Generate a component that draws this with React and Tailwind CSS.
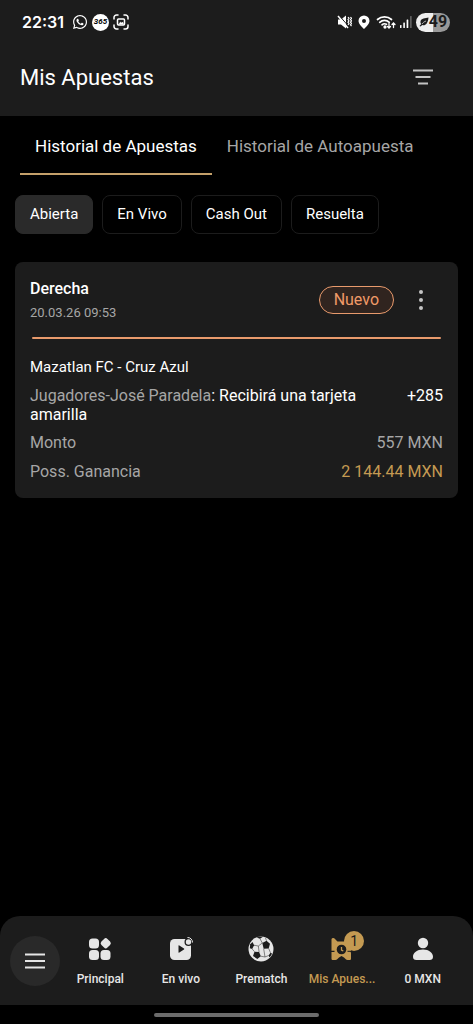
import { useState } from 'react';
import { FaWhatsapp } from 'react-icons/fa';

const tabs = ['Historial de Apuestas', 'Historial de Autoapuesta'];
const filters = ['Abierta', 'En Vivo', 'Cash Out', 'Resuelta'];

const StatusBar = () => (
  <div className="flex h-11 items-center justify-between pl-[22px] pr-[23px] text-white">
    <div className="flex items-center gap-1">
      <span className="mr-1 font-['Inter',sans-serif] text-base font-semibold">22:31</span>
      <FaWhatsapp className="size-4" />
      <span className="flex size-[17px] items-center justify-center rounded-full bg-white text-[8px] font-bold italic text-black">
        365
      </span>
      <svg className="size-4" viewBox="0 0 16 16" fill="none" stroke="currentColor" strokeWidth="1.5" strokeLinecap="round">
        <path d="M1 5V3.500A2.500 2.500 0 0 1 3.500 1H5M11 1h1.500A2.500 2.500 0 0 1 15 3.500V5M15 11v1.500a2.500 2.500 0 0 1-2.500 2.500H11M5 15H3.500A2.500 2.500 0 0 1 1 12.500V11" />
        <rect x="4.500" y="5" width="7" height="6" rx="1" />
        <path d="M6 10l1.500-2 1.200 1 1-1 .8 2z" fill="currentColor" strokeWidth="0.500" />
      </svg>
    </div>

    <div className="flex items-center">
      <svg className="mr-1.5 h-4 w-[15px]" viewBox="0 0 15 16" fill="none" stroke="currentColor">
        <path d="M1 5.500h3L9 1.500v13L4 10.500H1z" fill="currentColor" stroke="none" />
        <path d="M2 1.300l9.500 11" stroke="#1c1c1c" strokeWidth="1" />
        <path d="M1 2l10 12" strokeWidth="1.500" />
        <path d="M11 3l1 1.300-1 1.300 1 1.300-1 1.300 1 1.300-1 1.300M13.500 3l1 1.300-1 1.300 1 1.300-1 1.300 1 1.300-1 1.300 1 1.300" strokeWidth="1.200" />
      </svg>
      <svg className="mr-1.5 h-4 w-3" viewBox="0 0 12 16" fill="currentColor">
        <path fillRule="evenodd" d="M6 1.500a5.500 5.500 0 0 0-5.500 5.500c0 3.400 5.500 8 5.500 8S11.500 10.400 11.500 7A5.500 5.500 0 0 0 6 1.500zm0 3.500a2 2 0 1 1 0 4 2 2 0 0 1 0-4z" />
      </svg>
      <svg className="mr-1 h-4 w-5" viewBox="0 0 20 16" fill="none" stroke="currentColor" strokeWidth="1.700" strokeLinecap="round">
        <path d="M1.500 5.500a10.500 10.500 0 0 1 14 0M3.700 8.300a7.200 7.200 0 0 1 9.600 0M6 10.800a4 4 0 0 1 4.500-.5" />
        <path d="M13 9.500v4.500M11.500 12.500L13 14l1.500-1.500M17.500 13.500V9M16 10.500L17.500 9l1.500 1.500" strokeWidth="1.300" />
        <circle cx="9" cy="13" r="0.800" fill="currentColor" />
      </svg>
      <svg className="mr-1 h-4 w-3" viewBox="0 0 12 16" fill="currentColor">
        <rect x="0" y="11" width="1.500" height="3" rx=".5" />
        <rect x="3.300" y="8.500" width="1.600" height="5.500" rx=".5" />
        <rect x="6.600" y="5.500" width="1.700" height="8.500" rx=".5" />
        <rect x="10" y="2" width="1.700" height="12" rx=".5" opacity=".3" />
      </svg>
      <div className="flex h-[19px] w-[34px] items-center justify-center rounded-full bg-linear-to-r from-[#eeeeee] from-49% to-[#999999] to-49% text-[#1c1c1c]">
        <svg className="size-2.5" viewBox="0 0 10 10">
          <path d="M9.500.5c-3 1-7.500.5-8 4-.2 1.200.2 2 .7 2.500L.5 9l1 .5L3.300 8c2.700 1 5.700-1 6.200-7.500z" fill="currentColor" />
          <path d="M3 7c1-1.500 2.500-2.500 4-3" stroke="#eeeeee" strokeWidth=".7" fill="none" />
        </svg>
        <span className="text-base font-bold leading-none">49</span>
      </div>
    </div>
  </div>
);

const PrincipalIcon = () => (
  <svg className="size-6" viewBox="0 0 24 24" fill="currentColor">
    <rect x="1" y="1.500" width="10" height="10" rx="3.500" />
    <rect x="1" y="13" width="10" height="10" rx="3.500" />
    <rect x="12.500" y="13" width="10" height="10" rx="3.500" />
    <rect x="13.500" y="2" width="8.500" height="8.500" rx="2.400" transform="rotate(45 17.750 6.250)" />
  </svg>
);

const LiveIcon = () => (
  <svg className="size-6" viewBox="0 0 24 24" fill="none">
    <rect x="1" y="2" width="21" height="21" rx="4.500" fill="currentColor" />
    <path d="M9.500 8.800v6.400a.5.5 0 0 0 .8.400l4.700-3.200a.5.5 0 0 0 0-.8l-4.700-3.200a.5.500 0 0 0-.8.400z" fill="#1c1c1c" />
    <circle cx="19.500" cy="5" r="4" fill="#1c1c1c" />
    <circle cx="19.500" cy="5" r="2.700" fill="currentColor" />
    <path d="M18.500.5a4.800 4.800 0 0 1 5 5" stroke="currentColor" strokeWidth="1" />
  </svg>
);

const BallIcon = () => (
  <svg className="size-[26px]" viewBox="0 0 26 26">
    <circle cx="13" cy="13" r="12.500" fill="currentColor" />
    <g fill="#1c1c1c">
      <path d="M14.300 7l4.200-2.200 3.500 3-1.300 4.700-5 .3z" />
      <path d="M6.500 15.700l4.600.3 1.700 4.200-3.500 2.700-4.300-2.800z" />
      <path d="M2.200 8.200L4.500 6l1.600 3.200-1.900 3.800-2.400-.8z" />
      <path d="M8.500 1.500c2-.8 4-1 6.500-.7l-3 1.900z" />
      <path d="M24 17.500c-.8 2-1.400 2.700-2.700 3.800l-.7-1.800 1.900-2.700z" />
    </g>
    <path d="M12 2.700L14.300 7l-4 3L6.100 9.200M4.200 13l2.300 2.700M10.300 10l.8 6M20.700 12.500l1.800 4.300M12.800 20.200l4.200.8 3.600-1.500M15.700 12.800l1.300 8.200M18.500 4.800L17.500 2" stroke="#1c1c1c" strokeWidth=".5" fill="none" />
  </svg>
);

const TicketIcon = () => (
  <svg className="size-6" viewBox="0 0 24 24">
    <path d="M1.500 2.500c0-1 .8-1.500 1.800-1.500.7 0 1.200.4 1.700.9L7.500 4.500h7L17 2c.5-.5 1-1 1.700-1 1 0 2.300.5 2.300 1.500v11.300a1 1 0 0 0 0 1.800v6.200c0 .8-.6 1.200-1.500 1.200h-2c-.7 0-1.200-.3-1.700-.8L14 20.500l-2.500-1.500L9 20.500l-1.800 1.700c-.5.5-1 .8-1.700.8h-2.500c-.9 0-1.500-.5-1.500-1.300v-6.700h3v-1.300h-3z" fill="currentColor" />
    <circle cx="11.500" cy="12.500" r="4.800" fill="#1c1c1c" />
    <path d="M11.500 10v3l1.800 1" stroke="currentColor" strokeWidth="1.300" fill="none" />
    <path d="M17.500 14.300h4" stroke="#1c1c1c" strokeWidth="1" />
  </svg>
);

const UserIcon = () => (
  <svg className="size-6" viewBox="0 0 24 24" fill="currentColor">
    <circle cx="12" cy="6" r="5.200" />
    <path d="M12 12.500c6 0 10 3.500 10 7.200 0 2.300-1.300 3.300-3.300 3.300H5.300c-2 0-3.300-1-3.300-3.300 0-3.700 4-7.200 10-7.200z" />
  </svg>
);

const navItems = [
  { label: 'Principal', icon: PrincipalIcon },
  { label: 'En vivo', icon: LiveIcon },
  { label: 'Prematch', icon: BallIcon },
  { label: 'Mis Apues...', icon: TicketIcon, badge: 1 },
  { label: '0 MXN', icon: UserIcon },
];

const BetCard = () => (
  <article className="rounded-lg bg-[#1c1c1c] p-[15px] text-base">
    <div className="flex items-center justify-between">
      <div>
        <h2 className="font-medium leading-6 text-white">Derecha</h2>
        <p className="mt-0.5 text-[13px] leading-5 text-[#a6a6a6]">20.03.26 09:53</p>
      </div>
      <div className="flex items-center gap-[15px] pr-2.5">
        <span className="rounded-full border border-[#e89a6c] bg-[#30241f] px-3.5 leading-[26px] text-[#f09a68]">
          Nuevo
        </span>
        <button type="button" aria-label="Opciones" className="flex size-6 items-center justify-center text-[#c4c4c4]">
          <svg className="h-5 w-1" viewBox="0 0 4 20" fill="currentColor">
            <circle cx="2" cy="2" r="2" />
            <circle cx="2" cy="10" r="2" />
            <circle cx="2" cy="18" r="2" />
          </svg>
        </button>
      </div>
    </div>

    <div className="mx-0.5 mt-3.5 h-0.5 rounded-full bg-[#e89a6c]" />

    <h3 className="mt-[18px] text-[15px] leading-5 text-white">Mazatlan FC - Cruz Azul</h3>
    <div className="mt-[9px] flex items-start justify-between gap-8 leading-[19px] text-white">
      <p>
        <span className="text-[#a6a6a6]">Jugadores-José Paradela</span>: Recibirá una tarjeta amarilla
      </p>
      <span>+285</span>
    </div>
    <dl className="mt-2 text-[#a6a6a6]">
      <div className="flex justify-between leading-[22px]">
        <dt>Monto</dt>
        <dd>557 MXN</dd>
      </div>
      <div className="mt-[7px] flex justify-between leading-[22px]">
        <dt>Poss. Ganancia</dt>
        <dd className="text-[#c49a52]">2 144.44 MXN</dd>
      </div>
    </dl>
  </article>
);

const App = () => {
  const [activeTab, setActiveTab] = useState(tabs[0]);
  const [activeFilter, setActiveFilter] = useState('Abierta');

  return (
    <div className="flex min-h-screen flex-col bg-black font-['Roboto',sans-serif]">
      <header className="bg-[#1c1c1c]">
        <StatusBar />
        <div className="flex h-[72px] items-center justify-between pb-1 pl-5 pr-10">
          <h1 className="text-[22px] leading-8 text-white">Mis Apuestas</h1>
          <button type="button" aria-label="Filtrar" className="text-[#c4c4c4]">
            <svg className="h-[18px] w-5" viewBox="0 0 20 18" stroke="currentColor" strokeWidth="1.800">
              <path d="M0 1.500h20M2.500 8h15M5 14.500h10" />
            </svg>
          </button>
        </div>
      </header>

      <main className="flex-1">
        <div className="flex px-5">
          {tabs.map((tab) => (
            <button
              key={tab}
              type="button"
              onClick={() => setActiveTab(tab)}
              className={`whitespace-nowrap border-b-2 px-[15px] pb-[15px] pt-[18px] text-[17px] leading-6 ${
                activeTab === tab ? 'border-[#c4a06a] text-white' : 'border-transparent text-[#a6a6a6]'
              }`}
            >
              {tab}
            </button>
          ))}
        </div>

        <div className="mt-5 flex gap-[9px] px-[15px]">
          {filters.map((filter) => (
            <button
              key={filter}
              type="button"
              onClick={() => setActiveFilter(filter)}
              className={`h-[39px] rounded-lg border px-3.5 text-[15px] text-white ${
                activeFilter === filter ? 'border-[#2a2a2a] bg-[#2a2a2a]' : 'border-[#1c1c1c]'
              }`}
            >
              {filter}
            </button>
          ))}
        </div>

        <div className="mt-7 px-[15px]">
          <BetCard />
        </div>
      </main>

      <nav className="flex h-[89px] items-center rounded-t-[20px] bg-[#1c1c1c] pr-2.5 text-[#e6e6e6]">
        <button
          type="button"
          aria-label="Menú"
          className="ml-2.5 flex size-[50px] shrink-0 items-center justify-center rounded-full bg-[#292929]"
        >
          <svg className="h-4 w-5" viewBox="0 0 20 16" stroke="currentColor" strokeWidth="2">
            <path d="M0 1.500h20M0 8h20M0 14.500h20" />
          </svg>
        </button>
        {navItems.map(({ label, icon: Icon, badge }) => (
          <a
            key={label}
            href="#"
            className={`flex flex-1 basis-0 flex-col items-center pt-[3px] ${badge ? 'text-[#c49a52]' : ''}`}
          >
            <span className="relative flex h-[26px] items-center">
              <Icon />
              {badge && (
                <span className="absolute -right-2.5 -top-[5px] flex size-5 items-center justify-center rounded-full bg-[#c49a52] text-sm text-[#1c1c1c]">
                  {badge}
                </span>
              )}
            </span>
            <span className="mt-[7px] whitespace-nowrap text-xs font-medium leading-5">{label}</span>
          </a>
        ))}
      </nav>
      <div className="flex h-[19px] items-center justify-center">
        <div className="h-1 w-[35%] rounded-full bg-[#6b6b6b]" />
      </div>
    </div>
  );
};

export default App;
